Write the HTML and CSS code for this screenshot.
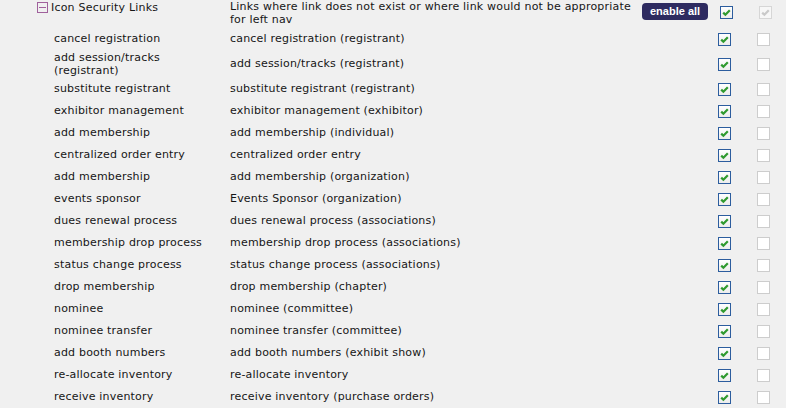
FILE: index.html
```html
<!DOCTYPE html>
<html><head>
<meta charset="utf-8">
<title>Icon Security Links</title>
<link rel="stylesheet" href="styles.css">
</head>
<body>
<div class="links">
  <div class="row head">
    <div class="name"><span class="toggle"></span>Icon Security Links</div>
    <div class="desc">Links where link does not exist or where link would not be appropriate for left nav</div>
    <div class="action"><a class="btn" href="#">enable all</a></div>
    <div class="cell"><span class="cb on"><svg viewBox="0 0 11 11"><path d="M2.2 5.6 L4.4 7.8 L8.8 3.2"/></svg></span></div>
    <div class="cell"><span class="cb dis"><svg viewBox="0 0 11 11"><path d="M2.2 5.6 L4.4 7.8 L8.8 3.2"/></svg></span></div>
  </div>

  <div class="row"><div class="name">cancel registration</div><div class="desc">cancel registration (registrant)</div><div class="action"></div><div class="cell"><span class="cb on"><svg viewBox="0 0 11 11"><path d="M2.2 5.6 L4.4 7.8 L8.8 3.2"/></svg></span></div><div class="cell"><span class="cb"></span></div></div>
  <div class="row"><div class="name">add session/tracks (registrant)</div><div class="desc">add session/tracks (registrant)</div><div class="action"></div><div class="cell"><span class="cb on"><svg viewBox="0 0 11 11"><path d="M2.2 5.6 L4.4 7.8 L8.8 3.2"/></svg></span></div><div class="cell"><span class="cb"></span></div></div>
  <div class="row"><div class="name">substitute registrant</div><div class="desc">substitute registrant (registrant)</div><div class="action"></div><div class="cell"><span class="cb on"><svg viewBox="0 0 11 11"><path d="M2.2 5.6 L4.4 7.8 L8.8 3.2"/></svg></span></div><div class="cell"><span class="cb"></span></div></div>
  <div class="row"><div class="name">exhibitor management</div><div class="desc">exhibitor management (exhibitor)</div><div class="action"></div><div class="cell"><span class="cb on"><svg viewBox="0 0 11 11"><path d="M2.2 5.6 L4.4 7.8 L8.8 3.2"/></svg></span></div><div class="cell"><span class="cb"></span></div></div>
  <div class="row"><div class="name">add membership</div><div class="desc">add membership (individual)</div><div class="action"></div><div class="cell"><span class="cb on"><svg viewBox="0 0 11 11"><path d="M2.2 5.6 L4.4 7.8 L8.8 3.2"/></svg></span></div><div class="cell"><span class="cb"></span></div></div>
  <div class="row"><div class="name">centralized order entry</div><div class="desc">centralized order entry</div><div class="action"></div><div class="cell"><span class="cb on"><svg viewBox="0 0 11 11"><path d="M2.2 5.6 L4.4 7.8 L8.8 3.2"/></svg></span></div><div class="cell"><span class="cb"></span></div></div>
  <div class="row"><div class="name">add membership</div><div class="desc">add membership (organization)</div><div class="action"></div><div class="cell"><span class="cb on"><svg viewBox="0 0 11 11"><path d="M2.2 5.6 L4.4 7.8 L8.8 3.2"/></svg></span></div><div class="cell"><span class="cb"></span></div></div>
  <div class="row"><div class="name">events sponsor</div><div class="desc">Events Sponsor (organization)</div><div class="action"></div><div class="cell"><span class="cb on"><svg viewBox="0 0 11 11"><path d="M2.2 5.6 L4.4 7.8 L8.8 3.2"/></svg></span></div><div class="cell"><span class="cb"></span></div></div>
  <div class="row"><div class="name">dues renewal process</div><div class="desc">dues renewal process (associations)</div><div class="action"></div><div class="cell"><span class="cb on"><svg viewBox="0 0 11 11"><path d="M2.2 5.6 L4.4 7.8 L8.8 3.2"/></svg></span></div><div class="cell"><span class="cb"></span></div></div>
  <div class="row"><div class="name">membership drop process</div><div class="desc">membership drop process (associations)</div><div class="action"></div><div class="cell"><span class="cb on"><svg viewBox="0 0 11 11"><path d="M2.2 5.6 L4.4 7.8 L8.8 3.2"/></svg></span></div><div class="cell"><span class="cb"></span></div></div>
  <div class="row"><div class="name">status change process</div><div class="desc">status change process (associations)</div><div class="action"></div><div class="cell"><span class="cb on"><svg viewBox="0 0 11 11"><path d="M2.2 5.6 L4.4 7.8 L8.8 3.2"/></svg></span></div><div class="cell"><span class="cb"></span></div></div>
  <div class="row"><div class="name">drop membership</div><div class="desc">drop membership (chapter)</div><div class="action"></div><div class="cell"><span class="cb on"><svg viewBox="0 0 11 11"><path d="M2.2 5.6 L4.4 7.8 L8.8 3.2"/></svg></span></div><div class="cell"><span class="cb"></span></div></div>
  <div class="row"><div class="name">nominee</div><div class="desc">nominee (committee)</div><div class="action"></div><div class="cell"><span class="cb on"><svg viewBox="0 0 11 11"><path d="M2.2 5.6 L4.4 7.8 L8.8 3.2"/></svg></span></div><div class="cell"><span class="cb"></span></div></div>
  <div class="row"><div class="name">nominee transfer</div><div class="desc">nominee transfer (committee)</div><div class="action"></div><div class="cell"><span class="cb on"><svg viewBox="0 0 11 11"><path d="M2.2 5.6 L4.4 7.8 L8.8 3.2"/></svg></span></div><div class="cell"><span class="cb"></span></div></div>
  <div class="row"><div class="name">add booth numbers</div><div class="desc">add booth numbers (exhibit show)</div><div class="action"></div><div class="cell"><span class="cb on"><svg viewBox="0 0 11 11"><path d="M2.2 5.6 L4.4 7.8 L8.8 3.2"/></svg></span></div><div class="cell"><span class="cb"></span></div></div>
  <div class="row"><div class="name">re-allocate inventory</div><div class="desc">re-allocate inventory</div><div class="action"></div><div class="cell"><span class="cb on"><svg viewBox="0 0 11 11"><path d="M2.2 5.6 L4.4 7.8 L8.8 3.2"/></svg></span></div><div class="cell"><span class="cb"></span></div></div>
  <div class="row"><div class="name">receive inventory</div><div class="desc">receive inventory (purchase orders)</div><div class="action"></div><div class="cell"><span class="cb on"><svg viewBox="0 0 11 11"><path d="M2.2 5.6 L4.4 7.8 L8.8 3.2"/></svg></span></div><div class="cell"><span class="cb"></span></div></div>
</div>
</body></html>
```

FILE: styles.css
```css
body {
  margin: 0;
  padding: 0;
  background-color: #f0f0f0;
  font-family: Verdana, "DejaVu Sans", sans-serif;
  font-size: 11px;
  letter-spacing: 0.2px;
  color: #161616;
}
.links {
  padding-left: 38px;
}
.row {
  display: grid;
  grid-template-columns: 192px 412px 70px 39px 39px;
  align-items: center;
  min-height: 22px;
  line-height: 13.5px;
}
.row .name {
  padding: 0.5px 14px 0.5px 16px;
}
.head {
  min-height: 28px;
  align-items: start;
  line-height: 13px;
}
.head .name {
  padding-left: 0;
  padding-top: 1px;
  display: flex;
  align-items: center;
}
.toggle {
  display: inline-block;
  box-sizing: border-box;
  width: 11px;
  height: 11px;
  border: 1px solid #a0619c;
  margin-left: -1px;
  margin-right: 3px;
  position: relative;
}
.toggle::after {
  content: "";
  position: absolute;
  left: 1px;
  right: 1px;
  top: 4px;
  height: 1px;
  background: #a0619c;
}
.action {
  align-self: start;
}
.btn {
  display: inline-block;
  margin-top: 3px;
  padding: 0 8px;
  height: 17px;
  line-height: 17px;
  border-radius: 4px;
  background-color: #2e2b60;
  color: #fff;
  font-family: "Liberation Sans", Arial, sans-serif;
  font-weight: bold;
  font-size: 11px;
  letter-spacing: 0;
  text-decoration: none;
}
.cell {
  padding-left: 6px;
  display: flex;
  align-items: center;
}
.head .cell {
  padding-left: 8px;
  padding-top: 6px;
}
.cb {
  display: block;
  box-sizing: border-box;
  width: 13px;
  height: 13px;
  border: 1px solid #cdcdcd;
  background: #fff;
}
.cb svg {
  display: block;
  width: 11px;
  height: 11px;
}
.cb path {
  fill: none;
  stroke-width: 2.2;
  stroke-linecap: butt;
}
.cb.on {
  border-color: #2c5d9e;
  background: linear-gradient(#ffffff, #ececec);
}
.cb.on path {
  stroke: #2f9a2f;
}
.cb.dis {
  border-color: #d6d6d6;
  background: #f7f7f7;
}
.cb.dis path {
  stroke: #c9c9c9;
}
```
